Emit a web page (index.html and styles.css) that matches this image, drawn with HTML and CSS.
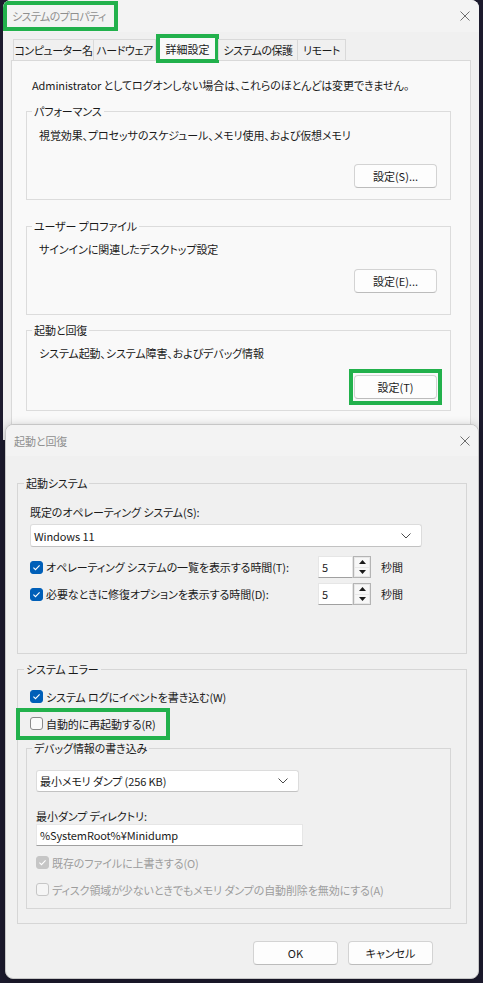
FILE: index.html
```html
<!DOCTYPE html>
<html lang="ja">
<head>
    <meta charset="UTF-8">
    <title>システムのプロパティ</title>
    <link rel="stylesheet" href="styles.css">
</head>
<body>
    <!-- システムのプロパティ (奥のウィンドウ) -->
    <div class="window window-back">
        <div class="titlebar">
            <span class="title title-back mark">システムのプロパティ</span>
            <svg class="close" width="10" height="10" viewBox="0 0 10 10"><path d="M0.5 0.5l9 9M9.5 0.5l-9 9" stroke="#6e6e6e" stroke-width="1"/></svg>
        </div>

        <div class="tabs">
            <span class="tab tab-name">コンピューター名</span>
            <span class="tab tab-hw">ハードウェア</span>
            <span class="tab tab-adv active mark">詳細設定</span>
            <span class="tab tab-protect">システムの保護</span>
            <span class="tab tab-remote">リモート</span>
        </div>

        <div class="tabpanel">
            <p class="note">Administrator としてログオンしない場合は、これらのほとんどは変更できません。</p>

            <fieldset class="group group-perf">
                <legend>パフォーマンス</legend>
                <p>視覚効果、プロセッサのスケジュール、メモリ使用、および仮想メモリ</p>
                <div class="actions"><button class="btn btn-settings">設定(S)...</button></div>
            </fieldset>

            <fieldset class="group group-profile">
                <legend>ユーザー プロファイル</legend>
                <p>サインインに関連したデスクトップ設定</p>
                <div class="actions"><button class="btn btn-settings">設定(E)...</button></div>
            </fieldset>

            <fieldset class="group group-startup">
                <legend>起動と回復</legend>
                <p>システム起動、システム障害、およびデバッグ情報</p>
                <div class="actions"><span class="mark mark-btn"><button class="btn btn-settings">設定(T)</button></span></div>
            </fieldset>
        </div>
    </div>

    <!-- 起動と回復 (手前のダイアログ) -->
    <div class="window window-front">
        <div class="titlebar titlebar-front">
            <span class="title">起動と回復</span>
            <svg class="close" width="10" height="10" viewBox="0 0 10 10"><path d="M0.5 0.5l9 9M9.5 0.5l-9 9" stroke="#6e6e6e" stroke-width="1"/></svg>
        </div>

        <div class="dialog-body">
            <fieldset class="frame frame-boot">
                <legend>起動システム</legend>
                <p class="label">既定のオペレーティング システム(S):</p>
                <div class="combo combo-os">
                    <span>Windows 11</span>
                    <svg width="10" height="6" viewBox="0 0 10 6"><path d="M0.5 0.5l4.5 4.5 4.5-4.5" fill="none" stroke="#4a4a4a"/></svg>
                </div>

                <div class="timer-rows">
                    <div class="timer-row">
                        <label class="check"><span class="box checked"><svg width="13" height="13" viewBox="0 0 13 13"><path d="M3.4 6.6l2.1 2.1 4.1-4.3" fill="none" stroke="#fff" stroke-width="1.1"/></svg></span>オペレーティング システムの一覧を表示する時間(T):</label>
                        <div class="spin">
                            <span class="spin-input">5</span>
                            <span class="spin-btns">
                                <span class="spin-btn"><svg width="7" height="4" viewBox="0 0 7 4"><path d="M0 4h7L3.5 0z" fill="#1a1a1a"/></svg></span>
                                <span class="spin-btn"><svg width="7" height="4" viewBox="0 0 7 4"><path d="M0 0h7L3.5 4z" fill="#1a1a1a"/></svg></span>
                            </span>
                        </div>
                        <span class="unit">秒間</span>
                    </div>
                    <div class="timer-row">
                        <label class="check"><span class="box checked"><svg width="13" height="13" viewBox="0 0 13 13"><path d="M3.4 6.6l2.1 2.1 4.1-4.3" fill="none" stroke="#fff" stroke-width="1.1"/></svg></span>必要なときに修復オプションを表示する時間(D):</label>
                        <div class="spin">
                            <span class="spin-input">5</span>
                            <span class="spin-btns">
                                <span class="spin-btn"><svg width="7" height="4" viewBox="0 0 7 4"><path d="M0 4h7L3.5 0z" fill="#1a1a1a"/></svg></span>
                                <span class="spin-btn"><svg width="7" height="4" viewBox="0 0 7 4"><path d="M0 0h7L3.5 4z" fill="#1a1a1a"/></svg></span>
                            </span>
                        </div>
                        <span class="unit">秒間</span>
                    </div>
                </div>
            </fieldset>

            <fieldset class="frame frame-error">
                <legend>システム エラー</legend>
                <div class="check-row">
                    <label class="check"><span class="box checked"><svg width="13" height="13" viewBox="0 0 13 13"><path d="M3.4 6.6l2.1 2.1 4.1-4.3" fill="none" stroke="#fff" stroke-width="1.1"/></svg></span>システム ログにイベントを書き込む(W)</label>
                </div>
                <div class="check-row">
                    <label class="check mark mark-row"><span class="box"></span>自動的に再起動する(R)</label>
                </div>

                <fieldset class="frame frame-debug">
                    <legend>デバッグ情報の書き込み</legend>
                    <div class="combo combo-dump">
                        <span>最小メモリ ダンプ (256 KB)</span>
                        <svg width="10" height="6" viewBox="0 0 10 6"><path d="M0.5 0.5l4.5 4.5 4.5-4.5" fill="none" stroke="#4a4a4a"/></svg>
                    </div>
                    <p class="label label-dir">最小ダンプ ディレクトリ:</p>
                    <div class="textbox">%SystemRoot%¥Minidump</div>
                    <div class="check-row check-row-first">
                        <label class="check disabled"><span class="box checked"><svg width="13" height="13" viewBox="0 0 13 13"><path d="M3.4 6.6l2.1 2.1 4.1-4.3" fill="none" stroke="#fff" stroke-width="1.1"/></svg></span>既存のファイルに上書きする(O)</label>
                    </div>
                    <div class="check-row">
                        <label class="check disabled"><span class="box"></span>ディスク領域が少ないときでもメモリ ダンプの自動削除を無効にする(A)</label>
                    </div>
                </fieldset>
            </fieldset>

            <div class="dialog-actions">
                <button class="btn btn-dialog">OK</button>
                <button class="btn btn-dialog">キャンセル</button>
            </div>
        </div>
    </div>
</body>
</html>
```

FILE: styles.css
```css
* {
    box-sizing: border-box;
    margin: 0;
    padding: 0;
}

body {
    font-family: "Noto Sans CJK JP", "Noto Sans", sans-serif;
    font-size: 11px;
    line-height: 16px;
    letter-spacing: -0.1px;
    font-feature-settings: "palt";
    color: #1a1a1a;
    background: #1c1a2d;
    height: 983px;
    position: relative;
    overflow: hidden;
}

/* 注目箇所の緑枠 */
.mark {
    outline: 4px solid #22b14c;
}

.window {
    background: #f0f0f0;
}

.window-back {
    width: 476px;
    height: 440px;
    margin-left: 3px;
    border-radius: 8px 8px 0 0;
    overflow: hidden;
}

.window-front {
    position: absolute;
    left: 5px;
    top: 424px;
    width: 474px;
    height: 555px;
    border: 1px solid #c6c6c6;
    border-radius: 8px;
    overflow: hidden;
    box-shadow: 0 2px 10px rgba(0, 0, 0, 0.25);
}

.titlebar {
    height: 32px;
    display: flex;
    align-items: center;
    justify-content: space-between;
    padding: 0 9px 0 4px;
    background: #f3f3f3;
}

.title {
    color: #8f8f8f;
    padding: 3px 8px 3px 5px;
}

.title-back {
    letter-spacing: -0.6px;
}

.titlebar-front {
    height: 31px;
    padding: 0 8px 0 3px;
}

.close {
    display: block;
}

/* タブ */
.tabs {
    display: flex;
    align-items: flex-end;
    height: 29px;
    padding-left: 10px;
    margin-bottom: -1px;
    position: relative;
    z-index: 1;
}

.tab {
    height: 21px;
    line-height: 20px;
    display: flex;
    justify-content: center;
    margin-bottom: 1px;
    margin-right: -1px;
    border: 1px solid #d9d9d9;
    border-bottom: none;
    background: #f0f0f0;
    white-space: nowrap;
    letter-spacing: -0.5px;
}

.tab-name { width: 81px; }
.tab-hw { width: 63px; }
.tab-adv { width: 59px; }
.tab-protect { width: 80px; }
.tab-remote { width: 49px; }

.tab.active {
    height: 25px;
    line-height: 24px;
    margin: 0 1px 0 3px;
    background: #f9f9f9;
    outline-offset: -2px;
    letter-spacing: 0;
}

.tabpanel {
    margin: 0 8px;
    height: 400px;
    padding-top: 16px;
    background: #f9f9f9;
    border: 1px solid #d9d9d9;
}

.note {
    margin-left: 20px;
}

.group {
    width: 425px;
    margin: 10px 0 0 14px;
    padding: 8px 13px 11px 12px;
    border: 1px solid #dcdcdc;
}

.group legend,
.frame legend {
    padding: 0 2px;
    margin-left: -7px;
}

.group-profile {
    margin-top: 18px;
    padding-top: 7px;
    padding-bottom: 21px;
}

.group-startup {
    margin-top: 7px;
    padding-top: 7px;
}

.actions {
    display: flex;
    justify-content: flex-end;
    margin-top: 21px;
}

.group-profile .actions {
    margin-top: 12px;
}

.group-startup .actions {
    margin-top: 14px;
}

.btn {
    font: inherit;
    color: #1a1a1a;
    height: 24px;
    background: #fdfdfd;
    border: 1px solid #d3d3d3;
    border-bottom-color: #bcbcbc;
    border-radius: 4px;
}

.btn-settings {
    width: 83px;
}

.mark-btn {
    display: flex;
    padding: 2px 1px 2px 1px;
    margin: -2px -1px;
}

/* 起動と回復ダイアログ */
.dialog-body {
    padding: 0 11px;
}

.frame {
    border: 1px solid #d6d6d6;
    padding: 13px 12px 48px 12px;
}

.frame-boot {
    margin-top: 19px;
}

.frame-boot legend,
.frame-error legend {
    margin-left: -6px;
}

.label {
    line-height: 16px;
}

.combo {
    display: flex;
    align-items: center;
    justify-content: space-between;
    background: #fff;
    border: 1px solid #dcdcdc;
    border-bottom-color: #c2c2c2;
    border-radius: 3px;
    padding: 0 10px 0 3px;
}

.combo-os {
    width: 392px;
    height: 23px;
    margin-top: 4px;
}

.timer-rows {
    display: flex;
    flex-direction: column;
    gap: 5px;
    margin-top: 9px;
}

.timer-row {
    display: grid;
    grid-template-columns: 288px 53px auto;
    align-items: center;
    height: 22px;
}

.unit {
    padding-left: 10px;
}

.check {
    display: inline-flex;
    align-items: center;
    gap: 3px;
    white-space: nowrap;
}

.box {
    width: 13px;
    height: 13px;
    border: 1px solid #8a8a8a;
    border-radius: 3px;
    background: #fafafa;
    display: flex;
}

.box.checked {
    background: #005fb8;
    border-color: #005fb8;
}

.box svg {
    margin: -1px;
}

.check.disabled {
    color: #9d9d9d;
}

.check.disabled .box {
    border-color: #c6c6c6;
    background: #f5f5f5;
}

.check.disabled .box.checked {
    background: #c6c6c6;
}

.spin {
    display: flex;
    height: 22px;
}

.spin-input {
    width: 35px;
    background: #fff;
    border: 1px solid #e6e6e6;
    border-bottom-color: #a0a0a0;
    padding-left: 3px;
    line-height: 21px;
}

.spin-btns {
    width: 18px;
    display: flex;
    flex-direction: column;
    gap: 1px;
    padding: 1px;
    border: 1px solid #b4b4b4;
    background: #e8e8e8;
}

.spin-btn {
    flex: 1;
    display: flex;
    align-items: center;
    justify-content: center;
    background: #f7f7f7;
}

.frame-error {
    margin-top: 7px;
    padding: 6px 15px 14px 12px;
}

.check-row {
    height: 27px;
    display: flex;
    align-items: center;
}

.mark-row {
    padding: 4px 10px;
    margin-left: -10px;
}

.frame-debug {
    margin: 3px 0 0 -4px;
    padding: 14px 12px 5px 9px;
}

.frame-debug legend {
    margin-left: -4px;
}

.combo-dump {
    width: 263px;
    height: 22px;
}

.label-dir {
    margin-top: 16px;
}

.textbox {
    width: 267px;
    height: 22px;
    background: #fff;
    border: 1px solid #e6e6e6;
    border-bottom-color: #a0a0a0;
    padding-left: 3px;
    line-height: 20px;
}

.check-row-first {
    margin-top: 3px;
}

.dialog-actions {
    display: flex;
    justify-content: flex-end;
    gap: 10px;
    margin-top: 17px;
    padding-right: 34px;
}

.btn-dialog {
    width: 85px;
}
```
